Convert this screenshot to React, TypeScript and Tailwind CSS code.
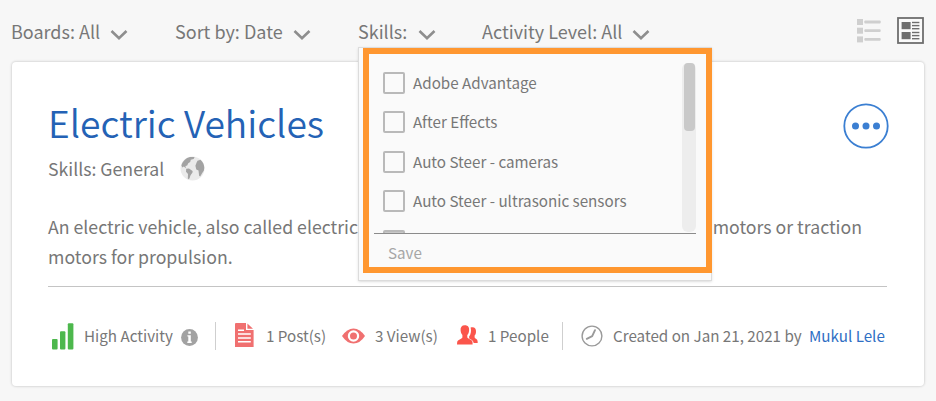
import React from "react";

const skills = [
  "Adobe Advantage",
  "After Effects",
  "Auto Steer - cameras",
  "Auto Steer - ultrasonic sensors",
];

function Chevron() {
  return (
    <svg className="mt-[10px] h-3 w-[18px] shrink-0" viewBox="0 0 18 12" fill="none" stroke="#8e8e8e" strokeWidth="2.6">
      <path d="M1.5 2 9 9.2 16.5 2" />
    </svg>
  );
}

function ListIcon() {
  return (
    <svg className="h-6 w-6" viewBox="0 0 24 24" fill="#cfcfcf">
      {[0, 8.7, 17.4].map((y) => (
        <g key={y}>
          <rect x="0" y={y} width="6" height="6" />
          <rect x="7.3" y={y + 1.6} width="16.4" height="2.8" rx="1" />
        </g>
      ))}
    </svg>
  );
}

function CardIcon() {
  return (
    <svg className="h-[27px] w-[27px]" viewBox="0 0 27 27" fill="#6e6e6e">
      <rect x="1" y="1" width="25" height="25" fill="#fafafa" stroke="#6e6e6e" strokeWidth="1.8" />
      {[5, 15].map((y) => (
        <g key={y}>
          <rect x="4.6" y={y} width="9" height="7.2" />
          <rect x="15" y={y - 0.2} width="7.4" height="1.4" />
          <rect x="15" y={y + 2.9} width="7.4" height="1.4" />
          <rect x="15" y={y + 6} width="7.4" height="1.4" />
        </g>
      ))}
    </svg>
  );
}

function Globe() {
  return (
    <svg className="ml-[16px] h-[25px] w-[25px]" viewBox="0 0 25 25">
      <circle cx="12.5" cy="12.5" r="12" fill="#ebebeb" />
      <g fill="#a3a3a3">
        <path d="M1.4 9.5C2.5 5 6 1.800 10 .9l4.600.2-1 2-2.800.7-.6 2.200-2 1.200-1 2.200-1.800.5.600 2.300-2.200-1.800-1.400 1z" />
        <path d="M6.2 12.8l2.8-.3 3.6 2.500c.5 1.600-1.300 3-2 4.300-.6 1.400-.8 3-1.800 4l-1-.8.2-4.400-2-2.300z" />
        <path d="M17.5 4.800l3-1c2.300 2 3.700 4.800 3.800 8l-.4 2.700-1.800 2.700-1.900 3.200-1.100-.6-.6-5.200-2.200-1.200-.9-3.700 1.100-3z" />
      </g>
    </svg>
  );
}

function BarsIcon() {
  return (
    <svg className="h-[27px] w-[22px]" viewBox="0 0 22 27" fill="#4db84d">
      <rect x="0" y="16" width="5.6" height="10.5" rx="1" />
      <rect x="8" y="8.2" width="5.4" height="18.3" rx="1" />
      <rect x="15.8" y="0.3" width="5.6" height="26.2" rx="1" />
    </svg>
  );
}

function InfoIcon() {
  return (
    <svg className="h-[17px] w-[17px]" viewBox="0 0 17 17">
      <circle cx="8.5" cy="8.5" r="8.4" fill="#a2a2a2" />
      <path fill="#fff" d="M7.3 2.5h2.5v2.3H7.3zM6.4 6.2h3.4v6.4h.9v1.3H6.3v-1.3h1V7.5h-.9z" />
    </svg>
  );
}

function PostIcon() {
  return (
    <svg className="h-6 w-[19px]" viewBox="0 0 19 24">
      <path fill="#f07070" d="M1 0h10v7h7.6v17H0V1q0-1 1-1zM12.4 0.6 18 5.8h-5.6z" />
      <path stroke="#fff" strokeWidth="1.5" d="M3 7.2h6M3 11h12.8M3 14.9h12.8M3 18.8h12.8" />
    </svg>
  );
}

function EyeIcon() {
  return (
    <svg className="h-4 w-[23px]" viewBox="0 0 23 16">
      <path fill="#f07070" d="M0 8Q5 .4 11.5.4T23 8q-5 7.6-11.5 7.6T0 8z" />
      <circle cx="11.5" cy="8" r="4.6" fill="none" stroke="#fff" strokeWidth="2.2" />
    </svg>
  );
}

function PeopleIcon() {
  return (
    <svg className="h-5 w-[21px]" viewBox="0 0 21 20" fill="#fb554b">
      <path d="M7.8.2c3.4 0 4.6 2.1 4.3 5.2-.2 2.1-.8 3.5-1.8 4.7v2.4c1 1.6 5 2 5.2 4.5l.1 2.5H0L.2 17c.4-2.5 4.6-2.9 5.2-4.5v-2.4C4.3 8.8 3.8 7.4 3.6 5.3 3.3 2.3 4.7.2 7.8.2z" />
      <path d="M13.6 2.4c3.8-.9 5.7.9 5.4 4.6-.1 1.8-.7 2.7-1.4 3.6v1.8c1.1 1.5 2.8 1.3 3 3.8l.1 1.7h-4c-.5-2.6-2.8-3.4-4.5-4.4l-.1-2c1.800-2.300 2.400-6 1.500-9.100z" />
    </svg>
  );
}

function ClockIcon() {
  return (
    <svg className="h-[22px] w-[22px]" viewBox="0 0 22 22" fill="none" stroke="#9a9a9a">
      <circle cx="11" cy="11" r="9.9" strokeWidth="1.4" />
      <path d="M14 5.2 11.2 11.2 5.8 13.8" strokeWidth="1.9" strokeLinecap="round" strokeLinejoin="round" />
    </svg>
  );
}

function SkillsMenu() {
  return (
    <div className="absolute left-0 top-[47px] z-10 h-[234px] w-[354px] border border-[#dcdcdc] bg-[#fafafa] pl-1 shadow-sm">
      <div className="flex h-[225px] w-[349px] flex-col border-[6px] border-[#ff9730] pl-[5px] pr-[10px]">
        <div className="flex h-[180px] justify-between border-b border-[#8b8b8b] pl-[9px] pt-[9px]">
          <div className="h-[170px] overflow-hidden text-[15.2px]">
            {skills.map((skill) => (
              <div key={skill} className="flex h-[39.5px] items-center gap-[8px]">
                <span className="h-[22px] w-[22px] rounded-[2px] border-2 border-[#b9b9b9] bg-[#fafafa]" />
                <span className="whitespace-nowrap pb-[2px]">{skill}</span>
              </div>
            ))}
            <div className="mt-[9px] h-[22px] w-[22px] rounded-[2px] border-2 border-[#b9b9b9] bg-[#c8c8c8]" />
          </div>
          <div className="h-[169px] w-[14px] rounded-[6px] bg-[#ededed] px-[1.5px]">
            <div className="h-[68px] rounded-[4px] bg-[#c9c9c9]" />
          </div>
        </div>
        <div className="pl-[14px] text-[15.2px] leading-[36px] text-[#a6a6a6]">Save</div>
      </div>
    </div>
  );
}

export default function App() {
  return (
    <div className="h-[401px] w-[936px] overflow-hidden bg-[#f7f7f7] font-['Noto_Sans_CJK_SC','Noto_Sans',sans-serif] text-[17.7px] text-[#777777]">
      <div className="flex h-[62px] items-start justify-between pl-[11px] pr-[12px]">
        <div className="flex whitespace-nowrap text-[18px] leading-6">
          <div className="flex h-[62px] w-[164px] items-start pt-[19px]">
            <span className="w-[99px]">Boards: All</span>
            <Chevron />
          </div>
          <div className="flex w-[183px] items-start pt-[19px]">
            <span className="w-[118px]">Sort by: Date</span>
            <Chevron />
          </div>
          <div className="relative flex w-[124px] items-start pt-[19px]">
            <span className="w-[60px]">Skills:</span>
            <Chevron />
            <SkillsMenu />
          </div>
          <div className="flex items-start pt-[19px]">
            <span className="w-[150px]">Activity Level: All</span>
            <Chevron />
          </div>
        </div>
        <div className="flex gap-[16px] pt-[17px]">
          <div className="pt-[2px]"><ListIcon /></div>
          <CardIcon />
        </div>
      </div>

      <div className="mx-3 h-[324px] w-[912px] rounded-[4px] bg-white px-9 pt-[35px] shadow-[0_0_2px_1px_#dadada]">
        <div className="flex justify-between">
          <div>
            <h1 className="whitespace-nowrap pt-px text-[37.2px] font-[350] leading-[48px] text-[#2462b5]">Electric Vehicles</h1>
            <div className="mt-[10px] flex h-6 items-center">
              <span>Skills: General</span>
              <Globe />
            </div>
          </div>
          <svg className="-mr-px mt-[6px] h-[46px] w-[46px]" viewBox="0 0 46 46" fill="#3b7fd2">
            <circle cx="23" cy="23" r="21.7" fill="none" stroke="#3b7fd2" strokeWidth="1.8" />
            <circle cx="12.5" cy="23" r="3.5" />
            <circle cx="23" cy="23" r="3.5" />
            <circle cx="33.5" cy="23" r="3.5" />
          </svg>
        </div>
        <div className="mt-[32px] h-[75px] w-[839px] border-b border-[#c4c4c4] leading-[29.5px]">
          <div className="flex w-[814px] justify-between whitespace-nowrap">
            <span>An electric vehicle, also called electric</span>
            <span>motors or traction</span>
          </div>
          <div>motors for propulsion.</div>
        </div>
        <div className="ml-[4px] mt-[34px] flex h-[30px] w-[834px] items-center whitespace-nowrap text-[15.2px] leading-6">
          <span className="w-8"><BarsIcon /></span>
          <span className="w-[97px] pb-[3px]">High Activity</span>
          <span className="w-[34px] pt-[3px]"><InfoIcon /></span>
          <span className="h-7 w-5 border-l border-[#cfcfcf]" />
          <span className="w-[31px] pb-[3px]"><PostIcon /></span>
          <span className="w-[76px] pb-[3px]">1 Post(s)</span>
          <span className="w-[33px]"><EyeIcon /></span>
          <span className="w-[82px] pb-[3px]">3 View(s)</span>
          <span className="w-[31px] pb-0.5"><PeopleIcon /></span>
          <span className="w-[74px] pb-[3px]">1 People</span>
          <span className="h-7 w-[19px] border-l border-[#cfcfcf]" />
          <span className="w-[32px]"><ClockIcon /></span>
          <span className="w-[196px] pb-[3px]">Created on Jan 21, 2021 by</span>
          <a className="pb-[3px] text-[#2f6fc4]">Mukul Lele</a>
        </div>
      </div>
    </div>
  );
}
